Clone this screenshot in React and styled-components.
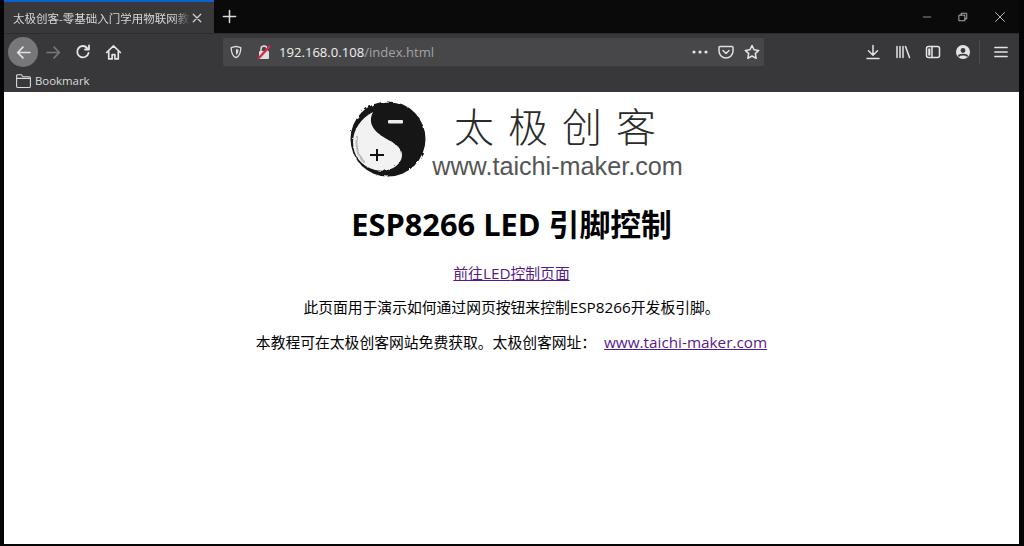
import React from 'react';
import styled, { createGlobalStyle } from 'styled-components';

const GlobalStyle = createGlobalStyle`
  html, body { margin: 0; padding: 0; height: 100%; background: #000; overflow: hidden; }
  #root { height: 100%; }
`;

const UI_FONT = `"Open Sans", "Noto Sans CJK SC", sans-serif`;

const Frame = styled.div`
  width: 1024px;
  height: 546px;
  box-sizing: border-box;
  padding: 0 5px 2px 4px;
  background: #050505;
  display: flex;
  flex-direction: column;
  font-family: ${UI_FONT};
`;

const TabStrip = styled.div`
  height: 33px;
  flex: none;
  display: flex;
  align-items: stretch;
  background: #0a0a0b;
`;

const Tab = styled.div`
  width: 210px;
  box-sizing: border-box;
  border-top: 2px solid #0a62cf;
  background: #38383a;
  display: flex;
  align-items: center;
  padding: 0 11px 0 9px;
  color: #d6d6d8;
  font-size: 11.5px;
`;

const TabTitle = styled.span`
  flex: 1;
  white-space: nowrap;
  -webkit-mask-image: linear-gradient(to right, #000 90%, transparent);
  mask-image: linear-gradient(to right, #000 90%, transparent);
`;

const StripButton = styled.button`
  all: unset;
  display: flex;
  align-items: center;
  justify-content: center;
  width: ${p => p.$w || 30}px;
  color: #dcdcde;
`;

const Spacer = styled.div`
  flex: 1;
`;

const Toolbar = styled.div`
  height: 35px;
  flex: none;
  box-sizing: border-box;
  padding: 2px 5px 0 4px;
  display: flex;
  align-items: center;
  background: #38383a;
  border-top: 1px solid #2c2c2e;
`;

const NavButton = styled.div`
  width: ${p => p.$w || 30}px;
  height: 30px;
  flex: none;
  display: flex;
  align-items: center;
  justify-content: center;
  border-radius: 50%;
  background: ${p => (p.$active ? '#77777a' : 'transparent')};
  color: ${p => p.$color || '#e4e4e6'};
`;

const UrlBar = styled.div`
  width: 541px;
  height: 28px;
  flex: none;
  margin-left: 95px;
  box-sizing: border-box;
  display: flex;
  align-items: center;
  padding: 0 0 0 6px;
  gap: 6px;
  border-radius: 2px;
  background: #47474a;
  color: #dfdfe1;
`;

const LockIcon = styled.svg`
  flex: none;
  margin-left: 7px;
`;

const UrlText = styled.div`
  flex: 1;
  margin-left: 1px;
  font-size: 13.1px;
  color: #f0f0f2;
  white-space: nowrap;
`;

const UrlPath = styled.span`
  color: #a3a3a6;
`;

const Divider = styled.div`
  width: 1px;
  height: 24px;
  margin: 0 8px 0 1px;
  background: #4c4c50;
`;

const BookmarkBar = styled.div`
  height: 24px;
  flex: none;
  display: flex;
  align-items: center;
  gap: 3px;
  padding-left: 11px;
  background: #38383a;
  color: #dcdcde;
  font-size: 11.4px;
`;

const Page = styled.main`
  flex: 1;
  background: #fff;
  color: #000;
  text-align: center;
  font-size: 14.8px;
  padding-top: 8px;
`;

const Logo = styled.div`
  display: flex;
  width: 334px;
  height: 80px;
  margin: 0 auto;
  padding-left: 8px;
  gap: 4px;
`;

const InkMark = styled.svg`
  flex: none;
`;

const LogoWords = styled.div`
  flex: 1;
  min-width: 0;
  display: flex;
  flex-direction: column;
  align-items: center;
`;

const LogoName = styled.div`
  font-family: "Noto Sans CJK SC", sans-serif;
  font-weight: 300;
  font-size: 40px;
  line-height: 50px;
  letter-spacing: 14px;
  margin-left: 9px;
  color: #2a2a2a;
  white-space: nowrap;
`;

const LogoUrl = styled.div`
  font-family: "Liberation Sans", sans-serif;
  font-size: 25.2px;
  line-height: 28px;
  margin-top: 2px;
  color: #555;
  white-space: nowrap;
`;

const Heading = styled.h1`
  margin: 23px 0 0;
  font-size: 30.8px;
  line-height: 42px;
  font-weight: 700;
`;

const Para = styled.p`
  margin: ${p => p.$top || 13}px 0 0;
  line-height: 22px;
`;

const Latin = styled.span`
  font-size: 15.3px;
`;

const VisitedLink = styled.a`
  color: #551a8b;
  text-decoration: underline;
  margin-left: ${p => p.$gap || 0}px;
`;

const Icon = ({ size = 16, children, sw = 1.6 }) => (
  <svg width={size} height={size} viewBox="0 0 16 16" fill="none" stroke="currentColor" strokeWidth={sw} strokeLinecap="round" strokeLinejoin="round">
    {children}
  </svg>
);

const YinYang = () => (
  <InkMark width="80" height="80" viewBox="0 0 80 80">
    <defs>
      <filter id="ink" x="-10%" y="-10%" width="120%" height="120%">
        <feTurbulence type="fractalNoise" baseFrequency="0.18" numOctaves="2" seed="4" />
        <feDisplacementMap in="SourceGraphic" scale="3" />
        <feGaussianBlur stdDeviation="0.5" />
      </filter>
    </defs>
    <g filter="url(#ink)">
      <circle cx="39" cy="39" r="37.5" fill="#141414" />
      <path d="M24 12 C12 18 4 30 4 42 C4 56 12 66 26 70 C40 73 52 66 53 56 C54 47 44 43 36 38 C26 32 18 24 24 12 Z" fill="#f2f2f2" />
      <path d="M8 36 C6 46 9 56 15 62" stroke="#bbb" strokeWidth="2" fill="none" />
    </g>
    <rect x="39" y="20" width="15" height="3.5" rx="1" fill="#eee" />
    <rect x="21" y="54" width="14" height="2" fill="#111" />
    <rect x="27" y="49" width="2" height="12" fill="#111" />
  </InkMark>
);

export default function App() {
  return (
    <Frame>
      <GlobalStyle />
      <TabStrip>
        <Tab>
          <TabTitle>太极创客-零基础入门学用物联网教</TabTitle>
          <Icon size={12}><path d="M3 3l10 10M13 3L3 13" /></Icon>
        </Tab>
        <StripButton>
          <Icon size={15}><path d="M8 1.5v13M1.5 8h13" /></Icon>
        </StripButton>
        <Spacer />
        <StripButton $w={36}>
          <Icon size={10} sw={1}><path d="M2 8h12" /></Icon>
        </StripButton>
        <StripButton $w={36}>
          <Icon size={10} sw={1.2}><path d="M2 5h9v9H2zM5 5V2h9v9h-3" /></Icon>
        </StripButton>
        <StripButton $w={38}>
          <Icon size={12} sw={1.1}><path d="M2 2l12 12M14 2L2 14" /></Icon>
        </StripButton>
      </TabStrip>

      <Toolbar>
        <NavButton $active>
          <Icon size={17}><path d="M14 8H2.5M7.5 3L2.5 8l5 5" /></Icon>
        </NavButton>
        <NavButton $color="#77777a">
          <Icon size={17}><path d="M2 8h11.5M8.5 3l5 5-5 5" /></Icon>
        </NavButton>
        <NavButton>
          <Icon size={16} sw={1.8}><path d="M13.5 9a5.7 5.7 0 1 1-1.4-5.2L14 5.5M14 1.5v4h-4" /></Icon>
        </NavButton>
        <NavButton>
          <Icon size={17}><path d="M1.5 8L8 1.8 14.5 8M3.5 7v7h3.2v-4h2.6v4h3.2V7" /></Icon>
        </NavButton>
        <UrlBar>
          <Icon size={14} sw={1.5}>
            <path d="M8 1.5l5.5 1.5c0 6-1.5 9.5-5.5 11.5C4 12.5 2.5 9 2.5 3z" />
            <path d="M8 4.5l2.8.8c0 3-.8 4.8-2.8 6z" fill="currentColor" stroke="none" />
          </Icon>
          <LockIcon width="16" height="16" viewBox="0 0 16 16">
            <path d="M5 7V5a3 3 0 0 1 6 0v2" fill="none" stroke="#ddd" strokeWidth="1.5" />
            <rect x="3" y="7" width="10" height="8" rx="1" fill="#ddd" />
            <path d="M2 15L14 2" stroke="#d7264f" strokeWidth="2.4" />
          </LockIcon>
          <UrlText>192.168.0.108<UrlPath>/index.html</UrlPath></UrlText>
          <NavButton $w={24}>
            <svg width="16" height="4" viewBox="0 0 16 4" fill="currentColor">
              <circle cx="2" cy="2" r="1.6" /><circle cx="8" cy="2" r="1.6" /><circle cx="14" cy="2" r="1.6" />
            </svg>
          </NavButton>
          <Icon size={16} sw={1.5}>
            <path d="M2 2.5h12a1 1 0 0 1 1 1V7a7 7 0 0 1-14 0V3.5a1 1 0 0 1 1-1z" />
            <path d="M5 6.5l3 3 3-3" />
          </Icon>
          <NavButton $w={24}>
            <Icon size={16} sw={1.5}><path d="M8 1.5l2 4.3 4.7.6-3.4 3.2.9 4.700L8 12l-4.200 2.300.9-4.700L1.300 6.400 6 5.800z" /></Icon>
          </NavButton>
        </UrlBar>
        <Spacer />
        <NavButton>
          <Icon size={16} sw={1.5}><path d="M8 1.5V11M3.5 6.8L8 11.2l4.5-4.4M2 14.5h12" /></Icon>
        </NavButton>
        <NavButton>
          <Icon size={16} sw={1.5}><path d="M2 2.5v11M5 2.5v11M8 2.5v11M10.5 2.5l4 11" /></Icon>
        </NavButton>
        <NavButton>
          <Icon size={16} sw={1.5}>
            <rect x="1.5" y="2.5" width="13" height="11" rx="2" />
            <path d="M7 2.5v11" />
            <path d="M3.2 4.5h2.200v7H3.200z" fill="currentColor" stroke="none" />
          </Icon>
        </NavButton>
        <NavButton>
          <svg width="16" height="16" viewBox="0 0 16 16">
            <circle cx="8" cy="8" r="7" fill="currentColor" />
            <circle cx="8" cy="6.5" r="2.4" fill="#38383a" />
            <path d="M3.5 12.5c1-2.5 8-2.5 9 0" stroke="#38383a" strokeWidth="1.8" fill="none" />
          </svg>
        </NavButton>
        <Divider />
        <NavButton $w={26}>
          <Icon size={16} sw={1.7}><path d="M2 3.5h12M2 8h12M2 12.5h12" /></Icon>
        </NavButton>
      </Toolbar>

      <BookmarkBar>
        <Icon size={17} sw={1}>
          <path d="M1.5 13.5v-10a1 1 0 0 1 1-1h3.500l1.500 2h6a1 1 0 0 1 1 1v8a1 1 0 0 1-1 1h-11a1 1 0 0 1-1-1z" />
          <path d="M1.5 6h13" />
        </Icon>
        <span>Bookmark</span>
      </BookmarkBar>

      <Page>
        <Logo>
          <YinYang />
          <LogoWords>
            <LogoName>太极创客</LogoName>
            <LogoUrl>www.taichi-maker.com</LogoUrl>
          </LogoWords>
        </Logo>
        <Heading>ESP8266 LED 引脚控制</Heading>
        <Para $top={17}><VisitedLink href="#">前往<Latin>LED</Latin>控制页面</VisitedLink></Para>
        <Para $top={12}>此页面用于演示如何通过网页按钮来控制<Latin>ESP8266</Latin>开发板引脚。</Para>
        <Para>本教程可在太极创客网站免费获取。太极创客网址： <VisitedLink href="#" $gap={4}><Latin>www.taichi-maker.com</Latin></VisitedLink></Para>
      </Page>
    </Frame>
  );
}
